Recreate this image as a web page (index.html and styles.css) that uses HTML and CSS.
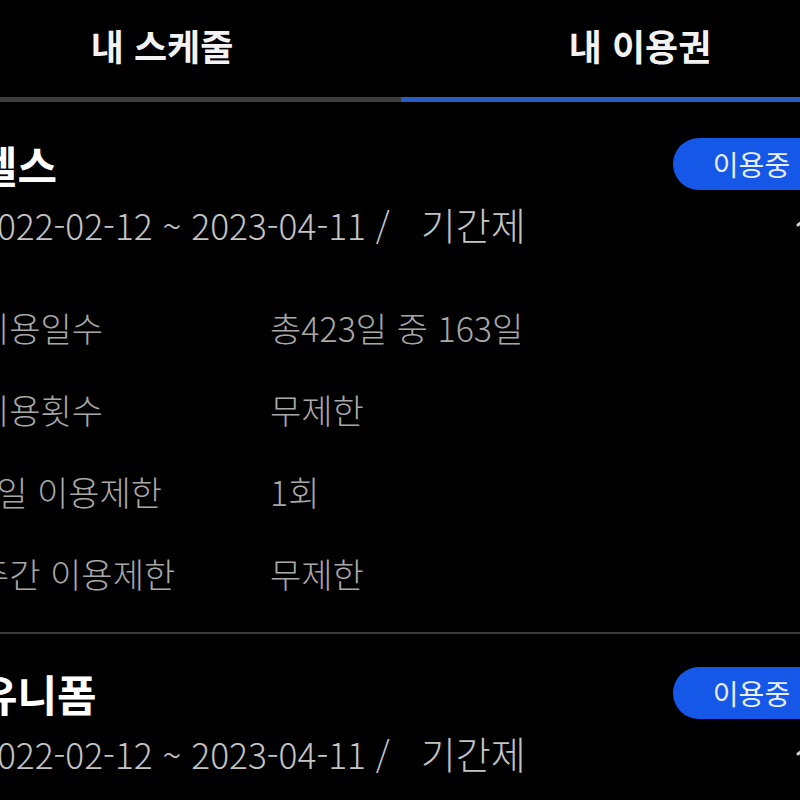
FILE: index.html
```html
<!DOCTYPE html>
<html lang="ko">
<head>
<meta charset="utf-8">
<link rel="stylesheet" href="styles.css">
</head>
<body>
<div class="app">
  <div class="tabs">
    <div class="tab">내 스케줄</div>
    <div class="tab active">내 이용권</div>
  </div>
  <div class="card">
    <div class="card-head">
      <div class="title">헬스</div>
      <div class="badge">이용중</div>
    </div>
    <div class="date-row">
      <div class="date"><span class="range">2022-02-12 ~ 2023-04-11 /</span><span class="sep"></span><span class="kind">기간제</span></div>
      <svg class="chev" width="28" height="16" viewBox="0 0 28 16"><polyline points="2,13 14,3 26,13" fill="none" stroke="#cfcfcf" stroke-width="3" stroke-linecap="round" stroke-linejoin="round"/></svg>
    </div>
    <div class="details">
      <div class="row"><span class="label">이용일수</span><span class="value">총423일 중 163일</span></div>
      <div class="row"><span class="label">이용횟수</span><span class="value">무제한</span></div>
      <div class="row"><span class="label">1일 이용제한</span><span class="value">1회</span></div>
      <div class="row"><span class="label">주간 이용제한</span><span class="value">무제한</span></div>
    </div>
  </div>
  <div class="card last">
    <div class="card-head">
      <div class="title">유니폼</div>
      <div class="badge">이용중</div>
    </div>
    <div class="date-row">
      <div class="date"><span class="range">2022-02-12 ~ 2023-04-11 /</span><span class="sep"></span><span class="kind">기간제</span></div>
      <svg class="chev" width="28" height="16" viewBox="0 0 28 16"><polyline points="2,13 14,3 26,13" fill="none" stroke="#cfcfcf" stroke-width="3" stroke-linecap="round" stroke-linejoin="round"/></svg>
    </div>
  </div>
</div>
</body>
</html>
```

FILE: styles.css
```css
html, body {
  margin: 0;
  padding: 0;
  background: #000;
  overflow: hidden;
}
body {
  width: 800px;
  height: 800px;
  font-family: "Noto Sans CJK KR", "Noto Sans", sans-serif;
  color: #fff;
}
.app {
  width: 956px;
  margin-left: -77px;
}
.tabs {
  display: grid;
  grid-template-columns: 1fr 1fr;
}
.tab {
  height: 102px;
  display: flex;
  align-items: center;
  justify-content: center;
  font-size: 36px;
  font-weight: 700;
  color: #f2f2f2;
  padding-bottom: 7px;
  box-sizing: border-box;
  border-bottom: 5px solid #3c3c3c;
}
.tab.active {
  border-bottom-color: #2b5cc4;
}
.card {
  padding: 36px 55px 18px;
  border-bottom: 2px solid #3a3a3a;
}
.card.last {
  border-bottom: none;
  padding-top: 33px;
}
.card-head {
  display: flex;
  align-items: center;
  justify-content: space-between;
  height: 52px;
}
.title {
  font-size: 43px;
  font-weight: 700;
  color: #fff;
}
.badge {
  width: 151px;
  height: 52px;
  box-sizing: border-box;
  padding-left: 6px;
  border-radius: 26px;
  background: #1557e6;
  color: #e8eefc;
  font-size: 28px;
  display: flex;
  align-items: center;
  justify-content: center;
}
.date-row {
  display: flex;
  align-items: center;
  justify-content: space-between;
  height: 44px;
  margin-top: 11px;
}
.date {
  display: flex;
  align-items: baseline;
  font-weight: 300;
  color: #c4c4c4;
}
.range {
  font-size: 35.3px;
}
.kind {
  font-size: 38px;
}
.sep {
  display: inline-block;
  width: 31px;
}
.chev {
  margin-top: -6px;
}
.details {
  margin-top: 41px;
}
.row {
  display: flex;
  align-items: center;
  height: 82px;
}
.label {
  width: 292px;
  font-size: 34px;
  font-weight: 300;
  color: #a8a8a8;
}
.value {
  font-size: 34px;
  font-weight: 300;
  color: #a8a8a8;
}
```
